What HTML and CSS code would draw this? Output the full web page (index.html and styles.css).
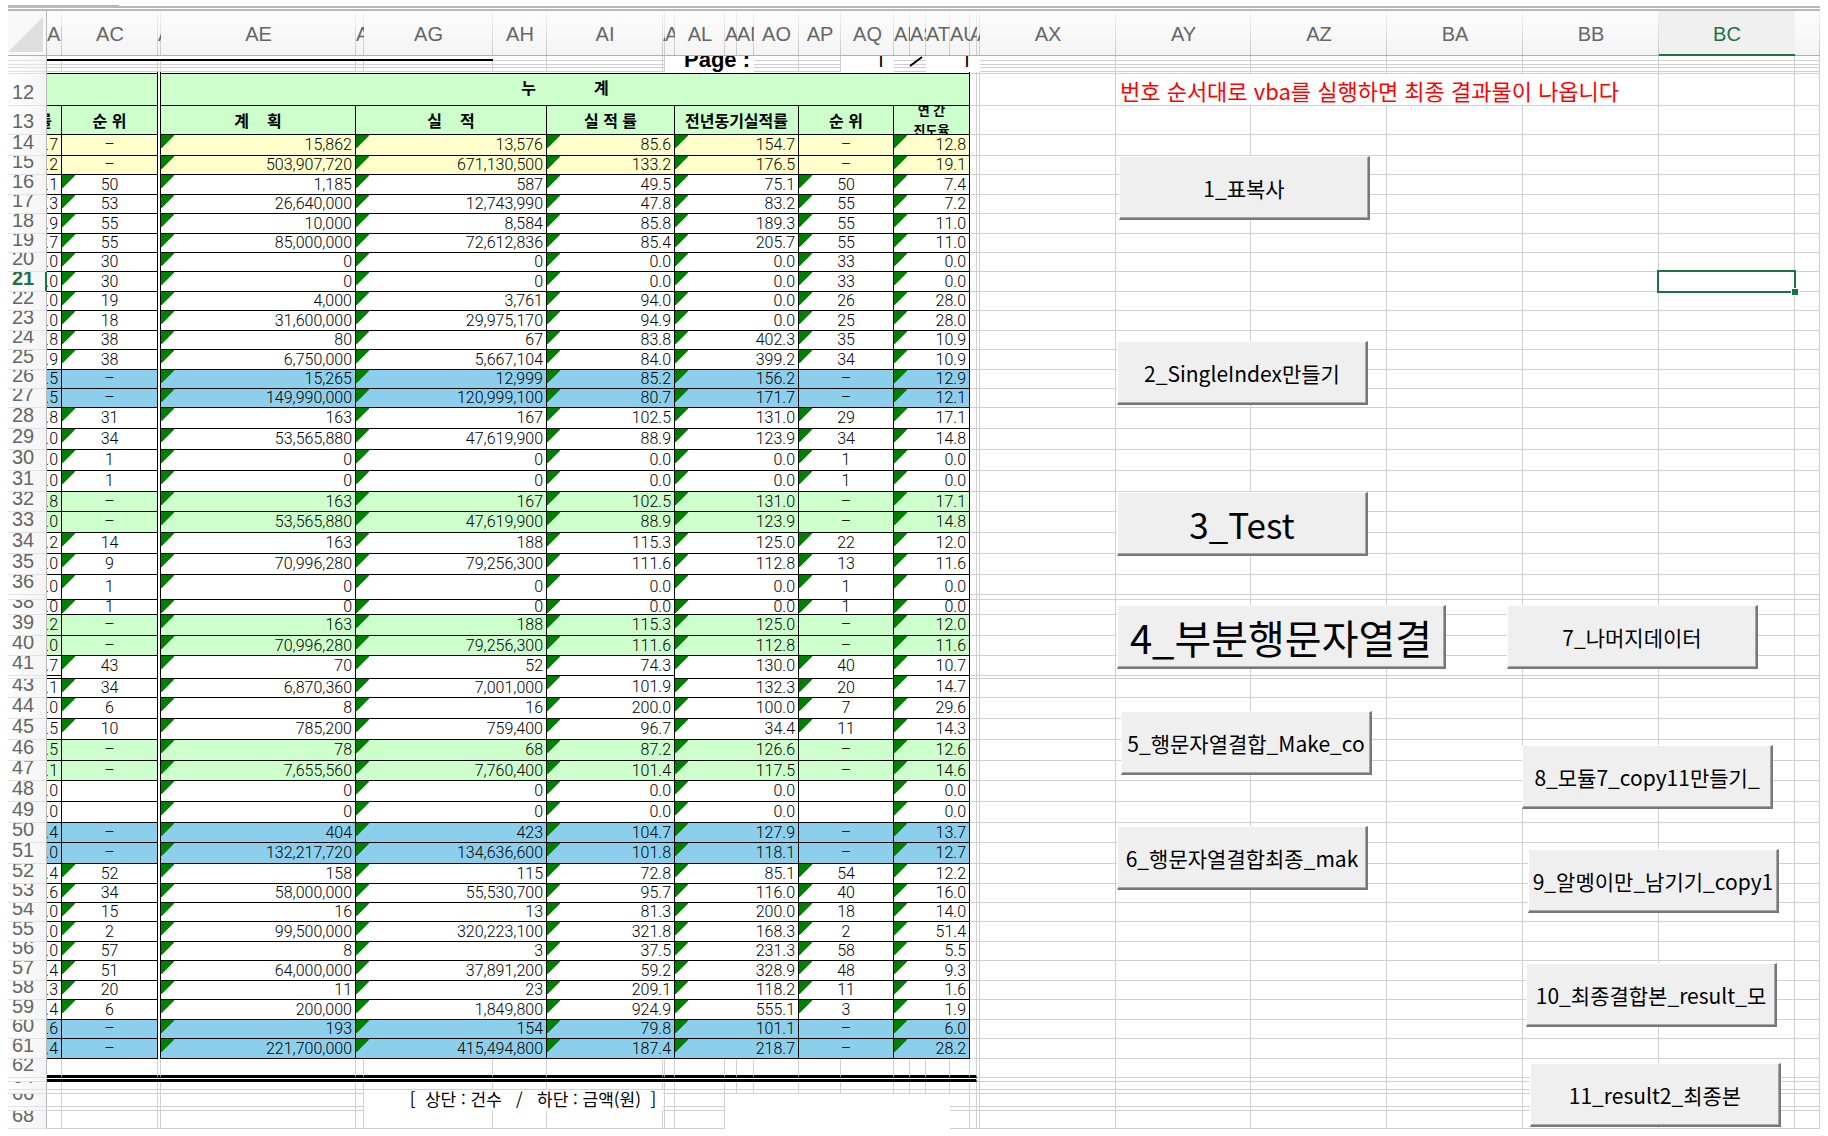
FILE: index.html
```html
<!DOCTYPE html>
<html lang="ko">
<head>
<meta charset="utf-8">
<title>실적표</title>
<link rel="stylesheet" href="styles.css">
</head>
<body>
<main class="sheet">
  <table class="grid" id="grid"></table>
  <div class="selection"></div>
  <button type="button" class="macro m1">1_표복사</button>
  <button type="button" class="macro m2">2_SingleIndex만들기</button>
  <button type="button" class="macro large m3">3_Test</button>
  <button type="button" class="macro huge m4">4_부분행문자열결</button>
  <button type="button" class="macro m5">5_행문자열결합_Make_co</button>
  <button type="button" class="macro m6">6_행문자열결합최종_mak</button>
  <button type="button" class="macro m7">7_나머지데이터</button>
  <button type="button" class="macro m8">8_모듈7_copy11만들기_</button>
  <button type="button" class="macro m9">9_알멩이만_남기기_copy1</button>
  <button type="button" class="macro m10">10_최종결합본_result_모</button>
  <button type="button" class="macro m11">11_result2_최종본</button>
</main>
<script src="sheet.js"></script>
</body>
</html>
```

FILE: styles.css
```css
body {
  margin: 0;
  background: #fff;
  font-family: "Liberation Sans", "Noto Sans CJK KR", sans-serif;
}

.sheet {
  position: relative;
  margin: 6px 8px 8px;
  border-top: 5px double #b8b8b8;
}

.sheet::before {
  content: "";
  position: absolute;
  top: -6px;
  left: 0;
  width: 111px;
  height: 2px;
  background: #b8b8b8;
}

.grid {
  width: 100%;
  table-layout: fixed;
  border-collapse: separate;
  border-spacing: 0;
}

.grid td,
.grid th {
  box-sizing: border-box;
  height: var(--h);
  padding: 0;
  overflow: hidden;
  white-space: nowrap;
  font-size: 0;
  line-height: 0;
}

/* column letters */
.grid .col {
  padding-top: 2px;
  border-bottom: 1px solid #b0b0b0;
  background:
    linear-gradient(#f4f4f4, #c8c8c8) right / 1px 100% no-repeat,
    linear-gradient(#fdfdfd, #f4f4f4);
  color: #666;
  font-size: 20px;
  font-weight: 400;
  line-height: 24px;
  text-align: center;
}

.grid .col.active {
  border-bottom: 2px solid #1e7145;
  background: #f0f0f0;
  color: #1e7145;
}

.grid .corner {
  border-right: 1px solid #b8b8b8;
  border-bottom: 1px solid #b0b0b0;
  background: #f8f8f8;
}

.corner svg {
  display: block;
}

/* row numbers */
.grid .num {
  border-right: 1px solid #b8b8b8;
  border-bottom: 1px solid #e2e2e2;
  background: linear-gradient(to right, #fff, #f4f4f4);
  color: #666;
  font-weight: 400;
}

.num div {
  display: flex;
  align-items: flex-end;
  height: calc(var(--h) - 1px);
  padding-left: 4px;
  overflow: hidden;
  font-size: 20px;
  line-height: 26px;
}

.grid .num.active {
  border-right: 2px solid #1e7145;
  color: #1e7145;
  font-weight: 700;
}

.grid .g {
  border-right: 1px solid #d0d0d0;
  border-bottom: 1px solid #d0d0d0;
}

.grid .noline {
  border-right: 0;
}

.grid .blank {
  background: #fff;
}

.grid .rule {
  border-bottom: 2px solid #000;
}

.grid .thick {
  border-right: 1px solid #d0d0d0;
  border-bottom: 3px solid #000;
}

/* report cells */
.grid .d {
  border-right: 1px solid #000;
  border-bottom: 1px solid #000;
  color: #000;
  font-family: Roboto, "Noto Sans CJK KR", sans-serif;
  font-size: 16px;
  font-weight: 300;
  line-height: 14px;
}

.grid .r {
  padding-right: 3px;
  text-align: right;
}

.grid .c {
  text-align: center;
}

.grid .open {
  border-bottom: 0;
}

.grid .gap {
  border-right: 1px solid #000;
  border-bottom: 0;
}

.part {
  display: flex;
  justify-content: flex-end;
}

.y .d { background-color: #ffffcc; }
.n .d { background-color: #ccffcc; }
.b .d { background-color: #8ccfec; }

.grid .flag {
  background-image: linear-gradient(to bottom right, #008000 50%, transparent calc(50% + 1px));
  background-size: 13px 13px;
  background-repeat: no-repeat;
}

.grid .h {
  color: #000;
  font-family: "Noto Sans CJK KR", sans-serif;
  font-size: 16px;
  font-weight: 700;
  line-height: 20px;
  white-space: pre;
  text-align: center;
}

.grid .title {
  padding-bottom: 5px;
}

.h .part {
  padding-right: 9px;
}

.two {
  display: flex;
  flex-direction: column;
  justify-content: center;
  height: 28px;
  overflow: hidden;
  font-size: 13px;
}

.grid .note {
  border-right: 1px solid #d0d0d0;
  border-bottom: 1px solid #d0d0d0;
  padding-left: 4px;
  color: #ff0000;
  font-family: "Noto Sans CJK KR", sans-serif;
  font-size: 22px;
  line-height: 28px;
}

.grid .legend {
  padding: 0 0 4px 39px;
  background: #fff;
  color: #000;
  font-family: "Noto Sans CJK KR", sans-serif;
  font-size: 17px;
  line-height: 16px;
  white-space: pre;
  text-align: center;
}

.page {
  display: flex;
  align-items: flex-end;
  justify-content: flex-end;
  height: 16px;
  padding-right: 4px;
  overflow: hidden;
  font-size: 22px;
  font-weight: 700;
  line-height: 24px;
}

.page.count {
  padding-right: 8px;
  font-family: Roboto, sans-serif;
  font-size: 20px;
  font-weight: 400;
}

.slash {
  position: absolute;
  top: 45px;
  left: 901px;
  width: 14px;
  height: 11px;
}

/* macro buttons placed over the sheet */
.macro {
  position: absolute;
  width: 251px;
  height: 64px;
  padding: 0;
  border: 2px solid;
  border-width: 1px 2px 2px 1px;
  border-color: #fff #777 #777 #fff;
  background: #efefef;
  box-shadow: inset -1px -1px 0 #a8a8a8;
  color: #000;
  font-family: "Noto Sans CJK KR", sans-serif;
  font-size: 21px;
  line-height: 30px;
  white-space: nowrap;
  overflow: hidden;
}

.macro.large { font-size: 35px; line-height: 40px; }
.macro.huge { width: 329px; font-size: 40px; line-height: 44px; }

.m1 { left: 1111px; top: 145px; }
.m2 { left: 1109px; top: 330px; }
.m3 { left: 1109px; top: 481px; }
.m4 { left: 1109px; top: 594px; }
.m5 { left: 1113px; top: 700px; }
.m6 { left: 1109px; top: 815px; }
.m7 { left: 1499px; top: 594px; }
.m8 { left: 1514px; top: 734px; }
.m9 { left: 1520px; top: 838px; }
.m10 { left: 1518px; top: 952px; }
.m11 { left: 1522px; top: 1052px; }

.selection {
  position: absolute;
  left: 1649px;
  top: 259px;
  width: 135px;
  height: 19px;
  border: 2px solid #1e7145;
}

.selection::after {
  content: "";
  position: absolute;
  right: -5px;
  bottom: -5px;
  width: 6px;
  height: 6px;
  border: 1px solid #fff;
  background: #1e7145;
}
```

FILE: sheet.js
```js
const columns = [
  ["AB", 15], ["AC", 96], ["AD", 3], ["AE", 195], ["AF", 8], ["AG", 129], ["AH", 54],
  ["AI", 116], ["AJ", 2], ["AK", 10], ["AL", 50], ["AM", 12], ["AN", 17], ["AO", 45],
  ["AP", 42], ["AQ", 53], ["AR", 16], ["AS", 16], ["AT", 24], ["AU", 20], ["AV", 7],
  ["AW", 3], ["AX", 136], ["AY", 135], ["AZ", 136], ["BA", 136], ["BB", 136], ["BC", 136], ["", 0]
];

// row | height | fill | AB | AC | AE | AG | AI | AL | AP | AR
const data = `14|21|y|.7|–|15,862|13,576|85.6|154.7|–|12.8
15|19|y|.2|–|503,907,720|671,130,500|133.2|176.5|–|19.1
16|20||.1|50|1,185|587|49.5|75.1|50|7.4
17|19||.3|53|26,640,000|12,743,990|47.8|83.2|55|7.2
18|20||.9|55|10,000|8,584|85.8|189.3|55|11.0
19|19||.7|55|85,000,000|72,612,836|85.4|205.7|55|11.0
20|19||.0|30|0|0|0.0|0.0|33|0.0
21|20||.0|30|0|0|0.0|0.0|33|0.0
22|19||.0|19|4,000|3,761|94.0|0.0|26|28.0
23|20||.0|18|31,600,000|29,975,170|94.9|0.0|25|28.0
24|19||.8|38|80|67|83.8|402.3|35|10.9
25|20||.9|38|6,750,000|5,667,104|84.0|399.2|34|10.9
26|19|b|.5|–|15,265|12,999|85.2|156.2|–|12.9
27|19|b|.5|–|149,990,000|120,999,100|80.7|171.7|–|12.1
28|21||.8|31|163|167|102.5|131.0|29|17.1
29|21||.0|34|53,565,880|47,619,900|88.9|123.9|34|14.8
30|21||.0|1|0|0|0.0|0.0|1|0.0
31|21||.0|1|0|0|0.0|0.0|1|0.0
32|20|n|.8|–|163|167|102.5|131.0|–|17.1
33|21|n|.0|–|53,565,880|47,619,900|88.9|123.9|–|14.8
34|21||.2|14|163|188|115.3|125.0|22|12.0
35|21||.0|9|70,996,280|79,256,300|111.6|112.8|13|11.6
36|20||.0|1|0|0|0.0|0.0|1|0.0
37|5|
38|15||.0|1|0|0|0.0|0.0|1|0.0
39|21|n|.2|–|163|188|115.3|125.0|–|12.0
40|20|n|.0|–|70,996,280|79,256,300|111.6|112.8|–|11.6
41|20||.7|43|70|52|74.3|130.0|40|10.7
42|3|
43|19||.1|34|6,870,360|7,001,000|101.9|132.3|20|14.7
44|21||.0|6|8|16|200.0|100.0|7|29.6
45|21||.5|10|785,200|759,400|96.7|34.4|11|14.3
46|21|n|.5|–|78|68|87.2|126.6|–|12.6
47|20|n|.1|–|7,655,560|7,760,400|101.4|117.5|–|14.6
48|21||.0||0|0|0.0|0.0||0.0
49|21||.0||0|0|0.0|0.0||0.0
50|20|b|.4|–|404|423|104.7|127.9|–|13.7
51|21|b|.0|–|132,217,720|134,636,600|101.8|118.1|–|12.7
52|20||.4|52|158|115|72.8|85.1|54|12.2
53|19||.6|34|58,000,000|55,530,700|95.7|116.0|40|16.0
54|19||.0|15|16|13|81.3|200.0|18|14.0
55|20||.0|2|99,500,000|320,223,100|321.8|168.3|2|51.4
56|19||.0|57|8|3|37.5|231.3|58|5.5
57|20||.4|51|64,000,000|37,891,200|59.2|328.9|48|9.3
58|19||.3|20|11|23|209.1|118.2|11|1.6
59|20||.4|6|200,000|1,849,800|924.9|555.1|3|1.9
60|19|b|.6|–|193|154|79.8|101.1|–|6.0
61|20|b|.4|–|221,700,000|415,494,800|187.4|218.7|–|28.2`;

const spans = [1, 1, 3, 3, 4, 2, 4];
const cell = (cls, text = "", cols = 1, rows = 1) =>
  `<td class="${cls}" colspan="${cols}" rowspan="${rows}">${text}</td>`;
const plain = n => cell("g").repeat(n);
const row = (height, label, body, cls = "") =>
  `<tr class="${cls}" style="--h:${height}px"><th scope="row" class="num${label === "21" ? " active" : ""}"><div>${label}</div></th>${body}</tr>`;

let html = `<colgroup><col style="width:39px">${columns.map(([, w]) => w ? `<col style="width:${w}px">` : "<col>").join("")}</colgroup>`;

html += `<thead><tr style="--h:45px"><th class="corner"><svg width="38" height="44" viewBox="0 0 38 44"><path d="M35 6V41H0Z" fill="#dedede"/></svg></th>`;
html += columns.map(([name]) => `<th scope="col" class="col${name === "BC" ? " active" : ""}">${name}</th>`).join("");
html += "</tr></thead><tbody>";

// collapsed rows above the report heading
const slash = `<svg class="slash" viewBox="0 0 14 11"><path d="M1 10L13 1" stroke="#000" stroke-width="2"/></svg>`;
[5, 3, 3, 4].forEach((h, i) => {
  const first = i === 0;
  let body = first ? cell("rule", "", 6) + plain(3) : plain(9);
  if (first) body += cell("blank", `<div class="page">Page :</div>`, 4, 4);
  body += plain(2);
  if (first) body += cell("blank", `<div class="page count">1</div>`, 1, 4);
  body += cell("g noline", first ? slash : "", 2);
  if (first) body += cell("blank", `<div class="page count">1</div>`, 4, 4);
  html += row(h, "", body + plain(7));
});
html += row(2, "", cell("d", "", 2) + cell("gap") + cell("d", "", 17) + plain(9));

html += row(32, "12",
  cell("d", "", 2) + cell("gap") + cell("d h title", "누             계", 17) +
  plain(3) + cell("note", "번호 순서대로 vba를 실행하면 최종 결과물이 나옵니다", 4) + plain(2), "n");
html += row(29, "13",
  cell("d h", `<div class="part">률</div>`) + cell("d h", "순 위") + cell("gap") + cell("d h", "계    획") +
  cell("d h", "실    적", 3) + cell("d h", "실 적 률", 3) + cell("d h", "전년동기실적률", 4) +
  cell("d h", "순 위", 2) + cell("d h", `<div class="two"><span>연 간</span><span>진도율</span></div>`, 4) + plain(9), "n");

for (const line of data.split("\n")) {
  const [label, height, fill, part, ...values] = line.split("|");
  if (label === "37") {
    html += row(height, "", cell("gap") + plain(9));
    continue;
  }
  if (label === "42") {
    html += row(height, "",
      cell("d") + cell("d") + cell("gap") + cell("d") + cell("d", "", 3) +
      cell("d r flag", "101.9", 3, 2) + cell("d", "", 4) + cell("d", "", 2) +
      cell("d r flag", "14.7", 4, 2) + plain(9));
    continue;
  }
  const tall = label === "36" ? 2 : 1;
  let body = cell("d r", `<div class="part">${part}</div>`, 1, tall);
  values.forEach((value, i) => {
    const ratio = i === 3 || i === 6;
    if (i === 1) body += cell("gap");
    if (label === "43" && ratio) return;
    const centred = i === 0 || i === 5;
    const flag = !centred || (value && value !== "–") ? " flag" : "";
    const open = label === "41" && !ratio ? " open" : "";
    body += cell(`d ${centred ? "c" : "r"}${flag}${open}`, value, spans[i], tall);
  });
  html += row(height, label, body + plain(9), fill);
}

html += row(19, "62", cell("thick").repeat(21) + plain(8));
html += row(4, "", cell("thick", "", 21) + plain(8));
html += row(8, "64", plain(29));
html += row(4, "", plain(5) + cell("legend", "[  상단 : 건수   /   하단 : 금액(원)  ]", 3, 3) + plain(21));
html += row(13, "66", plain(5) + plain(3) + cell("blank", "", 8, 3) + plain(10));
html += row(4, "", plain(5) + plain(3) + plain(10));
html += row(18, "68", plain(11) + plain(10));

document.getElementById("grid").innerHTML = html + "</tbody>";
```
